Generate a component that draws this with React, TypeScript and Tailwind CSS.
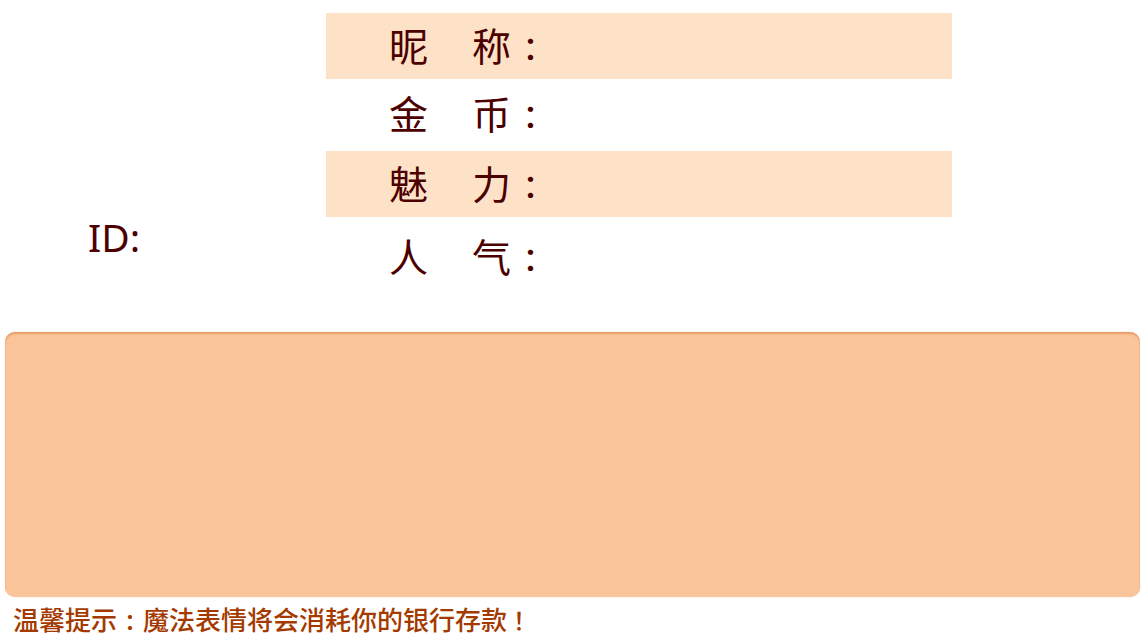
type Field = { first: string; last: string; row: string };

const fields: Field[] = [
  { first: "昵", last: "称", row: "h-[66px] bg-[#fee2c8]" },
  { first: "金", last: "币", row: "h-[70px]" },
  { first: "魅", last: "力", row: "mt-[2px] h-[66px] bg-[#fee2c8]" },
  { first: "人", last: "气", row: "h-20" },
];

function FieldRow({ first, last, row }: Field) {
  return (
    <div className={`flex items-center pl-[63px] ${row}`}>
      <dt className="flex items-baseline pb-[2px] text-[39px] leading-[40px]">
        <span className="w-[83px]">{first}</span>
        <span>{last}</span>
        <span className="w-[39px] text-center font-['Noto_Sans_CJK_TC',sans-serif] text-[32px] font-medium">：</span>
      </dt>
      <dd className="flex-1" />
    </div>
  );
}

export default function App() {
  return (
    <main className="min-h-screen bg-white font-['Noto_Sans_CJK_SC',sans-serif] text-[#4c0000]">
      <section className="flex pt-[13px]">
        <div className="w-[326px] shrink-0 pt-[204px] pl-[88px]">
          <p className="font-['Noto_Sans',sans-serif] text-[39px] leading-[40px]">ID:</p>
        </div>
        <dl className="mr-[194px] flex-1">
          {fields.map((field) => (
            <FieldRow key={field.first} {...field} />
          ))}
        </dl>
      </section>
      <section className="mr-[6px] ml-[5px] mt-[35px] h-[265px] rounded-[10px] bg-[#fac59b] shadow-[inset_0_2px_2px_#eb9c68,0_0_1px_#d8b8b8]" />
      <p className="pt-[7px] pl-[13px] text-[26px] leading-[30px] font-medium text-[#a43a00]">
        温馨提示
        <span className="inline-block w-[26px] text-center font-['Noto_Sans_CJK_TC',sans-serif] text-[22px] font-bold">：</span>
        魔法表情将会消耗你的银行存款
        <span className="font-['Noto_Sans_CJK_TC',sans-serif] text-[24px]">！</span>
      </p>
    </main>
  );
}
